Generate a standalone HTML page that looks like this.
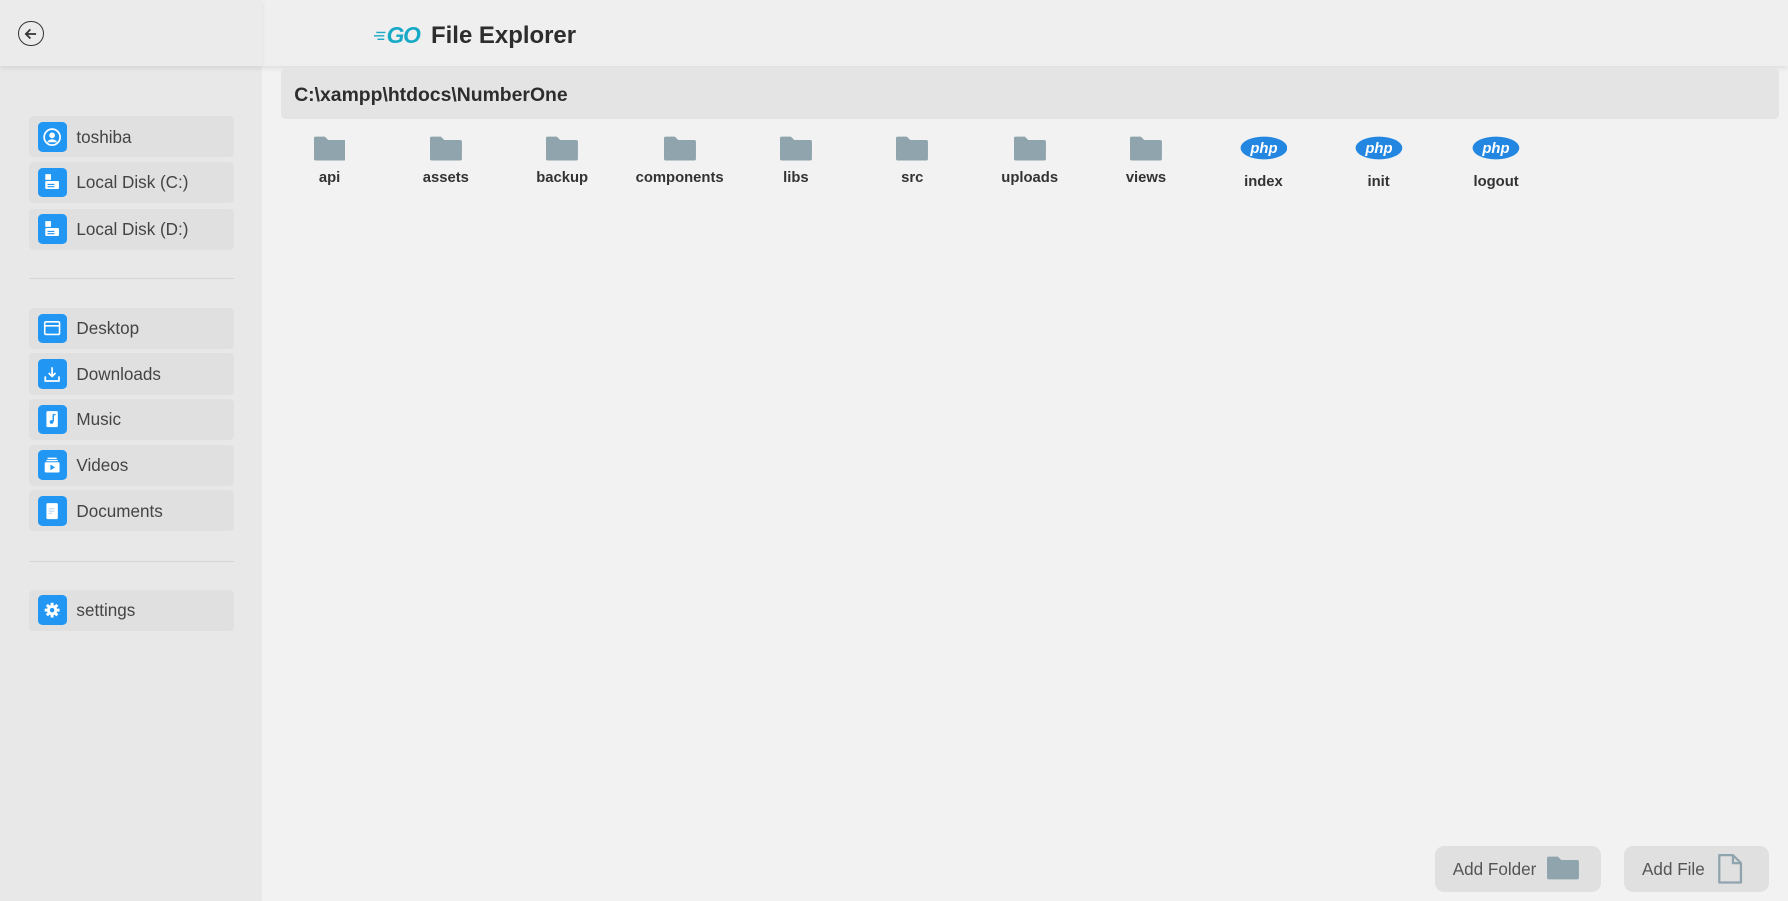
<!DOCTYPE html>
<html><head><meta charset="utf-8"><style>
html,body{margin:0;padding:0;}
html{width:1788px;height:901px;overflow:hidden;background:#f2f2f2;}
body{zoom:1.14031;width:1568px;height:790px;position:relative;font-family:"Liberation Sans",sans-serif;color:#333;background:#f2f2f2;}
.side{position:absolute;left:0;top:0;width:230px;height:790px;background:#e8e8e8;}
.sidehead{position:absolute;left:0;top:0;width:230px;height:58px;background:#ebebeb;box-shadow:0 2px 4px rgba(0,0,0,.08);}
.mainhead{position:absolute;left:230px;top:0;width:1338px;height:58px;background:#efefef;box-shadow:0 2px 4px rgba(0,0,0,.08);}
.back{position:absolute;left:16px;top:18px;width:21px;height:21px;border:1.5px solid #333;border-radius:50%;}
.title{position:absolute;left:378px;top:19px;font-size:21px;font-weight:bold;color:#2d2d2d;}
.go{position:absolute;left:339px;top:19px;font-size:20px;font-weight:900;font-style:italic;color:#18a9c6;letter-spacing:-1px;}
.item{position:absolute;left:25px;width:180px;height:36px;background:#e0e0e0;border-radius:4px;}
.item .ic{position:absolute;left:8px;top:5px;width:26px;height:26px;background:#2196f3;border-radius:4px;}
.item .ic svg{position:absolute;left:5px;top:5px;}
.item span{position:absolute;left:42px;top:10px;font-size:15px;color:#444;}
.div{position:absolute;left:25px;width:180px;height:1px;background:#d6d6d6;}
.path{position:absolute;left:246px;top:60px;width:1314px;height:44px;background:#e4e4e4;border-radius:4px;}
.path span{position:absolute;left:12px;top:14px;font-size:17px;font-weight:bold;color:#2d2d2d;}
.f{position:absolute;top:119px;width:80px;text-align:center;}
.f .lb{font-size:13px;font-weight:bold;color:#333;position:absolute;left:0;width:80px;}
.btn{position:absolute;top:742px;height:40px;background:#e0e0e0;border-radius:8px;}
.btn span{position:absolute;left:16px;top:12px;font-size:15px;color:#555;}
</style></head><body>
<div class="side"></div>
<div class="mainhead"></div>
<div class="sidehead"></div>
<div class="back"><svg width="21" height="21" viewBox="0 0 21 21" style="position:absolute;left:0;top:0"><path d="M15 10.5H6M10 6.5l-4 4 4 4" stroke="#333" stroke-width="1.5" fill="none"/></svg></div>
<svg style="position:absolute;left:328px;top:25px" width="12" height="12"><path d="M2 3h8M0 6h9M3 9h6" stroke="#18a9c6" stroke-width="1.2"/></svg>
<div class="go">GO</div>
<div class="title">File Explorer</div>

<div class="item" style="top:102px"><div class="ic"><svg width="16" height="16" viewBox="0 0 16 16"><circle cx="8" cy="8" r="7" stroke="#fff" stroke-width="1.5" fill="none"/><circle cx="8" cy="6.5" r="2.5" fill="#fff"/><path d="M3.5 12.5c1-2 3-2.5 4.5-2.5s3.5.5 4.5 2.5" fill="#fff"/></svg></div><span>toshiba</span></div>
<div class="item" style="top:142px"><div class="ic"><svg width="16" height="16"><rect x="2" y="1" width="5" height="5" fill="#fff"/><rect x="2" y="7" width="12" height="7" rx="1" fill="#fff"/><path d="M4 10h6M4 12h6" stroke="#2196f3"/></svg></div><span>Local Disk (C:)</span></div>
<div class="item" style="top:183px"><div class="ic"><svg width="16" height="16"><rect x="2" y="1" width="5" height="5" fill="#fff"/><rect x="2" y="7" width="12" height="7" rx="1" fill="#fff"/><path d="M4 10h6M4 12h6" stroke="#2196f3"/></svg></div><span>Local Disk (D:)</span></div>
<div class="div" style="top:244px"></div>
<div class="item" style="top:270px"><div class="ic"><svg width="16" height="16"><rect x="1.5" y="2.5" width="13" height="11" rx="1" stroke="#fff" stroke-width="1.4" fill="none"/><path d="M1.5 6h13" stroke="#fff" stroke-width="1.4"/></svg></div><span>Desktop</span></div>
<div class="item" style="top:310px"><div class="ic"><svg width="16" height="16"><path d="M8 2v8M5 7l3 3 3-3M2 10v4h12v-4" stroke="#fff" stroke-width="1.5" fill="none"/></svg></div><span>Downloads</span></div>
<div class="item" style="top:350px"><div class="ic"><svg width="16" height="16"><rect x="3" y="1" width="10" height="14" rx="1" fill="#fff"/><path d="M9 4v6M9 4h2" stroke="#2196f3" stroke-width="1.3"/><circle cx="7.5" cy="10.5" r="1.6" fill="#2196f3"/></svg></div><span>Music</span></div>
<div class="item" style="top:390px"><div class="ic"><svg width="16" height="16"><path d="M4 2h8M3 4h10" stroke="#fff" stroke-width="1.2"/><rect x="1.5" y="5.5" width="13" height="9" rx="1" fill="#fff"/><path d="M6.5 7.5v5l4-2.5z" fill="#2196f3"/></svg></div><span>Videos</span></div>
<div class="item" style="top:430px"><div class="ic"><svg width="16" height="16"><rect x="3" y="1" width="10" height="14" rx="1" fill="#fff"/><path d="M5 6h5M5 8h5M5 10h3" stroke="#bcdcfa" stroke-width="1"/></svg></div><span>Documents</span></div>
<div class="div" style="top:492px"></div>
<div class="item" style="top:517px"><div class="ic"><svg width="16" height="16" viewBox="0 0 16 16"><circle cx="8" cy="8" r="4.5" fill="#fff"/><path d="M8 1.5v13M1.5 8h13M3.4 3.4l9.2 9.2M12.6 3.4l-9.2 9.2" stroke="#fff" stroke-width="2.6"/><circle cx="8" cy="8" r="2" fill="#2196f3"/></svg></div><span>settings</span></div>

<div class="path"><span>C:\xampp\htdocs\NumberOne</span></div>

<div class="f" style="left:249px"><svg width="28" height="22"><path d="M0 2a1.5 1.5 0 011.5-1.5h8l3 3h14a1.5 1.5 0 011.5 1.5v15a1.5 1.5 0 01-1.5 1.5H1.5A1.5 1.5 0 010 20z" fill="#90a4ae"/></svg><div class="lb" style="top:30px">api</div></div>
<div class="f" style="left:351px"><svg width="28" height="22"><path d="M0 2a1.5 1.5 0 011.5-1.5h8l3 3h14a1.5 1.5 0 011.5 1.5v15a1.5 1.5 0 01-1.5 1.5H1.5A1.5 1.5 0 010 20z" fill="#90a4ae"/></svg><div class="lb" style="top:30px">assets</div></div>
<div class="f" style="left:453px"><svg width="28" height="22"><path d="M0 2a1.5 1.5 0 011.5-1.5h8l3 3h14a1.5 1.5 0 011.5 1.5v15a1.5 1.5 0 01-1.5 1.5H1.5A1.5 1.5 0 010 20z" fill="#90a4ae"/></svg><div class="lb" style="top:30px">backup</div></div>
<div class="f" style="left:556px"><svg width="28" height="22"><path d="M0 2a1.5 1.5 0 011.5-1.5h8l3 3h14a1.5 1.5 0 011.5 1.5v15a1.5 1.5 0 01-1.5 1.5H1.5A1.5 1.5 0 010 20z" fill="#90a4ae"/></svg><div class="lb" style="top:30px">components</div></div>
<div class="f" style="left:658px"><svg width="28" height="22"><path d="M0 2a1.5 1.5 0 011.5-1.5h8l3 3h14a1.5 1.5 0 011.5 1.5v15a1.5 1.5 0 01-1.5 1.5H1.5A1.5 1.5 0 010 20z" fill="#90a4ae"/></svg><div class="lb" style="top:30px">libs</div></div>
<div class="f" style="left:760px"><svg width="28" height="22"><path d="M0 2a1.5 1.5 0 011.5-1.5h8l3 3h14a1.5 1.5 0 011.5 1.5v15a1.5 1.5 0 01-1.5 1.5H1.5A1.5 1.5 0 010 20z" fill="#90a4ae"/></svg><div class="lb" style="top:30px">src</div></div>
<div class="f" style="left:863px"><svg width="28" height="22"><path d="M0 2a1.5 1.5 0 011.5-1.5h8l3 3h14a1.5 1.5 0 011.5 1.5v15a1.5 1.5 0 01-1.5 1.5H1.5A1.5 1.5 0 010 20z" fill="#90a4ae"/></svg><div class="lb" style="top:30px">uploads</div></div>
<div class="f" style="left:965px"><svg width="28" height="22"><path d="M0 2a1.5 1.5 0 011.5-1.5h8l3 3h14a1.5 1.5 0 011.5 1.5v15a1.5 1.5 0 01-1.5 1.5H1.5A1.5 1.5 0 010 20z" fill="#90a4ae"/></svg><div class="lb" style="top:30px">views</div></div>

<div class="f" style="left:1068px"><svg width="42" height="21"><ellipse cx="21" cy="10.5" rx="20.5" ry="10" fill="#2386e0"/><text x="21" y="15" text-anchor="middle" font-family="Liberation Sans,sans-serif" font-style="italic" font-weight="bold" font-size="13" fill="#fff">php</text></svg><div class="lb" style="top:34px">index</div></div>
<div class="f" style="left:1169px"><svg width="42" height="21"><ellipse cx="21" cy="10.5" rx="20.5" ry="10" fill="#2386e0"/><text x="21" y="15" text-anchor="middle" font-family="Liberation Sans,sans-serif" font-style="italic" font-weight="bold" font-size="13" fill="#fff">php</text></svg><div class="lb" style="top:34px">init</div></div>
<div class="f" style="left:1272px"><svg width="42" height="21"><ellipse cx="21" cy="10.5" rx="20.5" ry="10" fill="#2386e0"/><text x="21" y="15" text-anchor="middle" font-family="Liberation Sans,sans-serif" font-style="italic" font-weight="bold" font-size="13" fill="#fff">php</text></svg><div class="lb" style="top:34px">logout</div></div>

<div class="btn" style="left:1258px;width:146px"><span>Add Folder</span><svg style="position:absolute;left:99px;top:9px" width="28" height="22"><path d="M0 2a1.5 1.5 0 011.5-1.5h8l3 3h14a1.5 1.5 0 011.5 1.5v14a1.5 1.5 0 01-1.5 1.5H1.5A1.5 1.5 0 010 19z" fill="#90a4ae"/></svg></div>
<div class="btn" style="left:1424px;width:127px"><span>Add File</span><svg style="position:absolute;left:82px;top:7px" width="24" height="27"><path d="M2 1h12l7 7v17H2z M14 1v7h7" stroke="#90a4ae" stroke-width="2" fill="none" stroke-linejoin="round"/></svg></div>
</body></html>
